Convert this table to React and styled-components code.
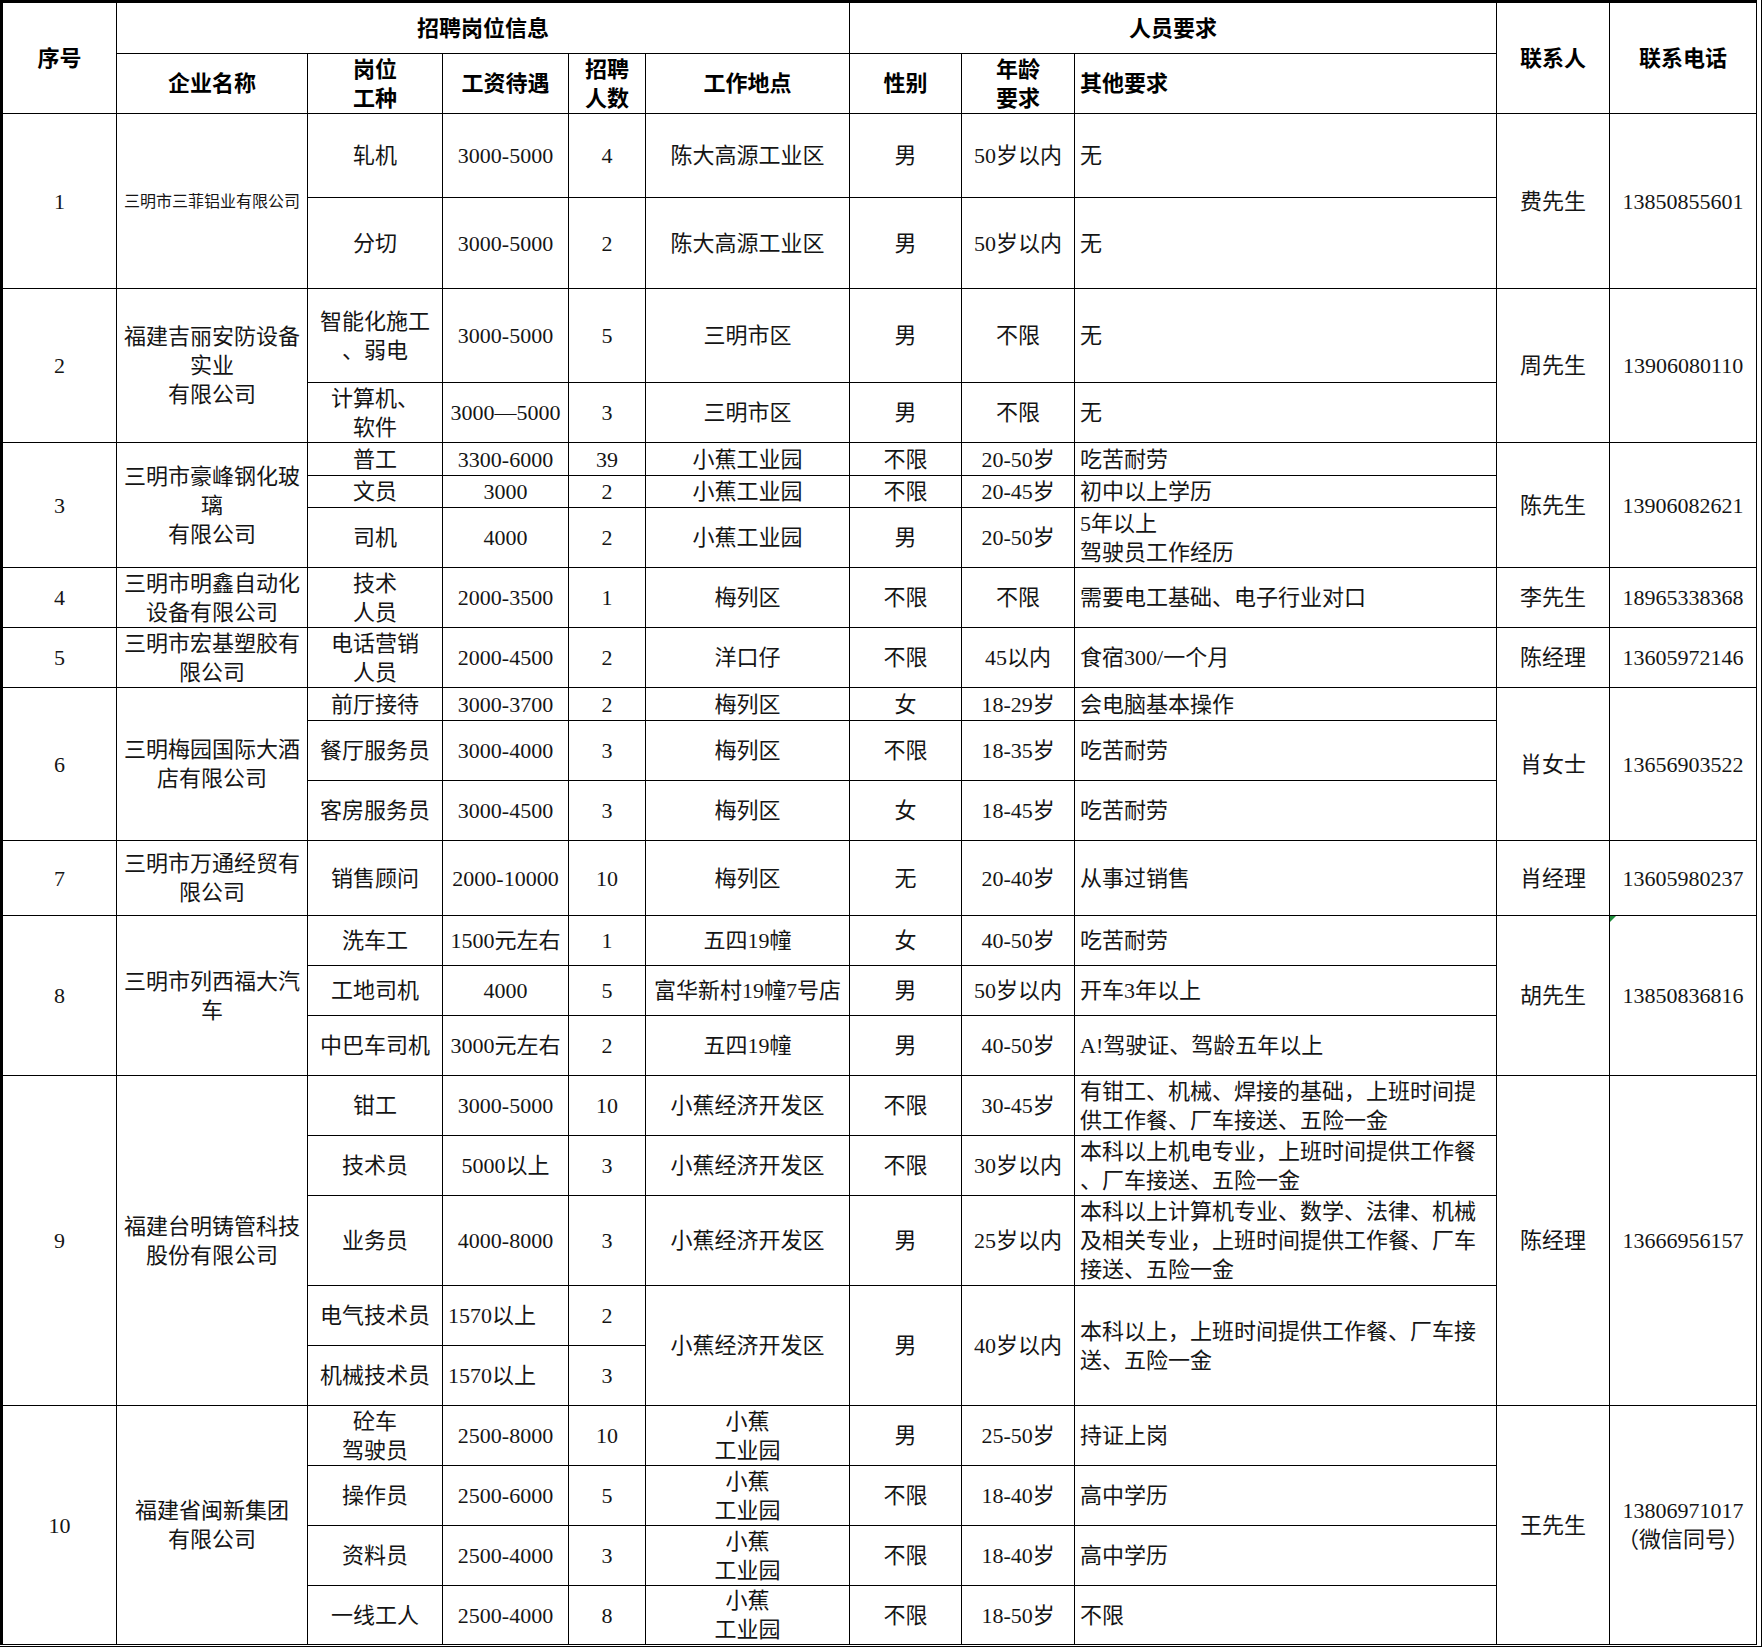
import styled, { createGlobalStyle } from "styled-components";

const GlobalStyle = createGlobalStyle`
  html, body {
    margin: 0;
    padding: 0;
    background: #fff;
  }
  body {
    font-family: "Liberation Serif", "Noto Sans CJK SC", serif;
  }
`;

const Sheet = styled.div`
  width: 1762px;
  height: 1647px;
  box-sizing: border-box;
  border-right: 1px solid #000;
  border-bottom: 1px solid #000;
  overflow: hidden;
`;

const Table = styled.table`
  border-collapse: collapse;
  table-layout: fixed;
  width: 1755px;
  border-left: 3px solid #000;
  border-top: 3px solid #000;
  border-right: 1px solid #000;
  border-bottom: 1px solid #000;
  color: #151515;
  font-size: 22px;
  line-height: 29px;
`;

const Row = styled.tr`
  height: ${(p) => p.$h}px;
`;

const Head = styled.th`
  border: 1px solid #000;
  padding: 0 ${(p) => (p.$left ? "5px" : "0")};
  font-weight: 700;
  color: #000;
  text-align: ${(p) => (p.$left ? "left" : "center")};
  white-space: pre;
`;

const Cell = styled.td`
  position: relative;
  border: 1px solid #000;
  padding: 0 ${(p) => (p.$left ? "5px" : "1px")};
  font-size: ${(p) => p.$size || 22}px;
  text-align: ${(p) => (p.$left ? "left" : "center")};
  white-space: pre;
`;

// little green triangle excel puts on "number stored as text"
const Marker = styled.span`
  position: absolute;
  top: 0;
  left: 0;
  width: 0;
  height: 0;
  border-top: 6px solid #1e8c3a;
  border-right: 6px solid transparent;
`;

const cols = [115, 191, 135, 126, 77, 204, 112, 113, 422, 113, 147];

const groups = [
  {
    no: 1,
    name: "三明市三菲铝业有限公司",
    small: true,
    contact: "费先生",
    phone: "13850855601",
    rows: [
      { h: 84, job: "轧机", pay: "3000-5000", num: 4, place: "陈大高源工业区", sex: "男", age: "50岁以内", other: "无" },
      { h: 91, job: "分切", pay: "3000-5000", num: 2, place: "陈大高源工业区", sex: "男", age: "50岁以内", other: "无" },
    ],
  },
  {
    no: 2,
    name: "福建吉丽安防设备\n实业\n有限公司",
    contact: "周先生",
    phone: "13906080110",
    rows: [
      { h: 94, job: "智能化施工\n、弱电", pay: "3000-5000", num: 5, place: "三明市区", sex: "男", age: "不限", other: "无" },
      { h: 60, job: "计算机、\n软件", pay: "3000—5000", num: 3, place: "三明市区", sex: "男", age: "不限", other: "无" },
    ],
  },
  {
    no: 3,
    name: "三明市豪峰钢化玻\n璃\n有限公司",
    contact: "陈先生",
    phone: "13906082621",
    rows: [
      { h: 33, job: "普工", pay: "3300-6000", num: 39, place: "小蕉工业园", sex: "不限", age: "20-50岁", other: "吃苦耐劳" },
      { h: 32, job: "文员", pay: "3000", num: 2, place: "小蕉工业园", sex: "不限", age: "20-45岁", other: "初中以上学历" },
      { h: 60, job: "司机", pay: "4000", num: 2, place: "小蕉工业园", sex: "男", age: "20-50岁", other: "5年以上\n驾驶员工作经历" },
    ],
  },
  {
    no: 4,
    name: "三明市明鑫自动化\n设备有限公司",
    contact: "李先生",
    phone: "18965338368",
    rows: [
      { h: 60, job: "技术\n人员", pay: "2000-3500", num: 1, place: "梅列区", sex: "不限", age: "不限", other: "需要电工基础、电子行业对口" },
    ],
  },
  {
    no: 5,
    name: "三明市宏基塑胶有\n限公司",
    contact: "陈经理",
    phone: "13605972146",
    rows: [
      { h: 60, job: "电话营销\n人员", pay: "2000-4500", num: 2, place: "洋口仔", sex: "不限", age: "45以内", other: "食宿300/一个月" },
    ],
  },
  {
    no: 6,
    name: "三明梅园国际大酒\n店有限公司",
    contact: "肖女士",
    phone: "13656903522",
    rows: [
      { h: 33, job: "前厅接待", pay: "3000-3700", num: 2, place: "梅列区", sex: "女", age: "18-29岁", other: "会电脑基本操作" },
      { h: 60, job: "餐厅服务员", pay: "3000-4000", num: 3, place: "梅列区", sex: "不限", age: "18-35岁", other: "吃苦耐劳" },
      { h: 60, job: "客房服务员", pay: "3000-4500", num: 3, place: "梅列区", sex: "女", age: "18-45岁", other: "吃苦耐劳" },
    ],
  },
  {
    no: 7,
    name: "三明市万通经贸有\n限公司",
    contact: "肖经理",
    phone: "13605980237",
    rows: [
      { h: 75, job: "销售顾问", pay: "2000-10000", num: 10, place: "梅列区", sex: "无", age: "20-40岁", other: "从事过销售" },
    ],
  },
  {
    no: 8,
    name: "三明市列西福大汽\n车",
    contact: "胡先生",
    phone: "13850836816",
    mark: true,
    rows: [
      { h: 50, job: "洗车工", pay: "1500元左右", num: 1, place: "五四19幢", sex: "女", age: "40-50岁", other: "吃苦耐劳" },
      { h: 50, job: "工地司机", pay: "4000", num: 5, place: "富华新村19幢7号店", sex: "男", age: "50岁以内", other: "开车3年以上" },
      { h: 60, job: "中巴车司机", pay: "3000元左右", num: 2, place: "五四19幢", sex: "男", age: "40-50岁", other: "A!驾驶证、驾龄五年以上" },
    ],
  },
  {
    no: 9,
    name: "福建台明铸管科技\n股份有限公司",
    contact: "陈经理",
    phone: "13666956157",
    rows: [
      { h: 60, job: "钳工", pay: "3000-5000", num: 10, place: "小蕉经济开发区", sex: "不限", age: "30-45岁", other: "有钳工、机械、焊接的基础，上班时间提\n供工作餐、厂车接送、五险一金" },
      { h: 60, job: "技术员", pay: "5000以上", num: 3, place: "小蕉经济开发区", sex: "不限", age: "30岁以内", other: "本科以上机电专业，上班时间提供工作餐\n、厂车接送、五险一金" },
      { h: 90, job: "业务员", pay: "4000-8000", num: 3, place: "小蕉经济开发区", sex: "男", age: "25岁以内", other: "本科以上计算机专业、数学、法律、机械\n及相关专业，上班时间提供工作餐、厂车\n接送、五险一金" },
      { h: 60, job: "电气技术员", pay: "1570以上", payLeft: true, num: 2, place: "小蕉经济开发区", sex: "男", age: "40岁以内", other: "本科以上，上班时间提供工作餐、厂车接\n送、五险一金", span: 2 },
      { h: 60, job: "机械技术员", pay: "1570以上", payLeft: true, num: 3, merged: true },
    ],
  },
  {
    no: 10,
    name: "福建省闽新集团\n有限公司",
    contact: "王先生",
    phone: "13806971017\n（微信同号）",
    rows: [
      { h: 60, job: "砼车\n驾驶员", pay: "2500-8000", num: 10, place: "小蕉\n工业园", sex: "男", age: "25-50岁", other: "持证上岗" },
      { h: 60, job: "操作员", pay: "2500-6000", num: 5, place: "小蕉\n工业园", sex: "不限", age: "18-40岁", other: "高中学历" },
      { h: 60, job: "资料员", pay: "2500-4000", num: 3, place: "小蕉\n工业园", sex: "不限", age: "18-40岁", other: "高中学历" },
      { h: 59, job: "一线工人", pay: "2500-4000", num: 8, place: "小蕉\n工业园", sex: "不限", age: "18-50岁", other: "不限" },
    ],
  },
];

const App = () => {
  return (
    <>
      <GlobalStyle />
      <Sheet>
        <Table>
          <colgroup>
            {cols.map((w, i) => (
              <col key={i} style={{ width: w }} />
            ))}
          </colgroup>
          <thead>
            <Row $h={52}>
              <Head rowSpan={2}>序号</Head>
              <Head colSpan={5}>招聘岗位信息</Head>
              <Head colSpan={3}>人员要求</Head>
              <Head rowSpan={2}>联系人</Head>
              <Head rowSpan={2}>联系电话</Head>
            </Row>
            <Row $h={60}>
              <Head>企业名称</Head>
              <Head>{"岗位\n工种"}</Head>
              <Head>工资待遇</Head>
              <Head>{"招聘\n人数"}</Head>
              <Head>工作地点</Head>
              <Head>性别</Head>
              <Head>{"年龄\n要求"}</Head>
              <Head $left>其他要求</Head>
            </Row>
          </thead>
          <tbody>
            {groups.map((g) =>
              g.rows.map((r, i) => (
                <Row key={g.no + "-" + i} $h={r.h}>
                  {i === 0 && (
                    <>
                      <Cell rowSpan={g.rows.length}>{g.no}</Cell>
                      <Cell rowSpan={g.rows.length} $size={g.small ? 16 : 22}>
                        {g.name}
                      </Cell>
                    </>
                  )}
                  <Cell>{r.job}</Cell>
                  <Cell $left={r.payLeft}>{r.pay}</Cell>
                  <Cell>{r.num}</Cell>
                  {!r.merged && (
                    <>
                      <Cell rowSpan={r.span || 1}>{r.place}</Cell>
                      <Cell rowSpan={r.span || 1}>{r.sex}</Cell>
                      <Cell rowSpan={r.span || 1}>{r.age}</Cell>
                      <Cell rowSpan={r.span || 1} $left>
                        {r.other}
                      </Cell>
                    </>
                  )}
                  {i === 0 && (
                    <>
                      <Cell rowSpan={g.rows.length}>{g.contact}</Cell>
                      <Cell rowSpan={g.rows.length}>
                        {g.mark && <Marker />}
                        {g.phone}
                      </Cell>
                    </>
                  )}
                </Row>
              ))
            )}
          </tbody>
        </Table>
      </Sheet>
    </>
  );
};

export default App;
